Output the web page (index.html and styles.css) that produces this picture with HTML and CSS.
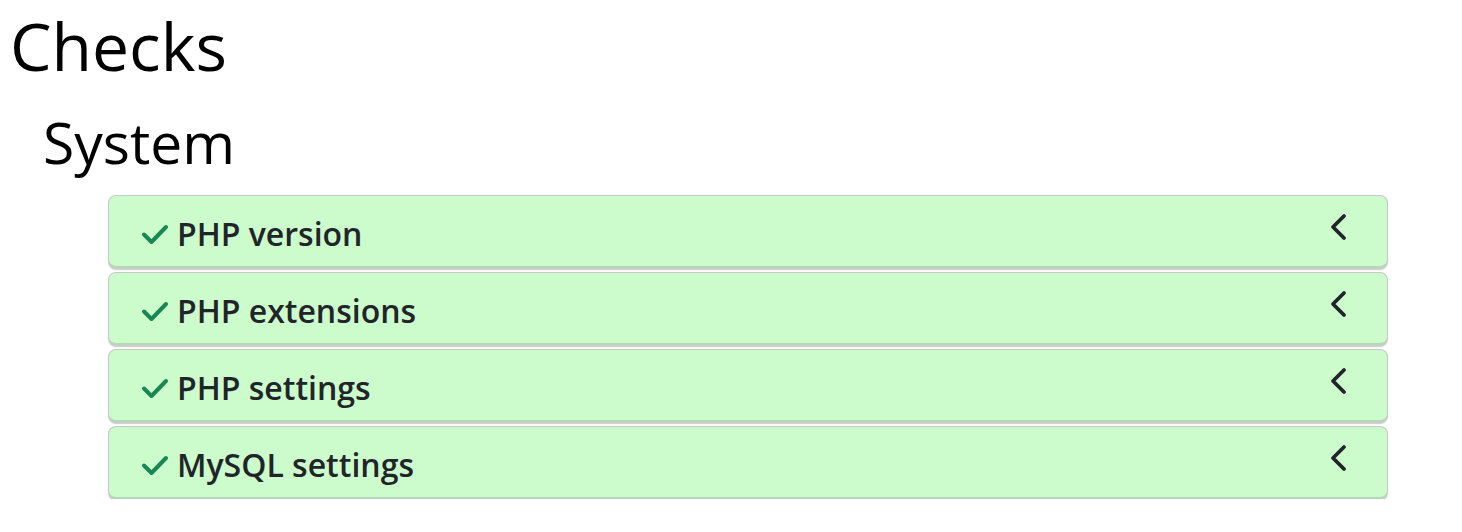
FILE: index.html
```html
<!DOCTYPE html>
<html lang="en">
<head>
    <meta charset="UTF-8">
    <title>Checks</title>
    <link rel="stylesheet" href="styles.css">
</head>
<body>

<h1>Checks</h1>

<section class="section">
    <h2>System</h2>

    <div class="check-list">
        <div class="check">
            <span class="check-mark"><svg viewBox="0 0 28 22" width="28" height="22"><path d="M3 11.5l7.5 7.5L25 4" fill="none" stroke="currentColor" stroke-width="4" stroke-linecap="round" stroke-linejoin="round"/></svg></span>
            <span class="check-title">PHP version</span>
            <span class="chevron"><svg viewBox="0 0 18 28" width="18" height="28"><path d="M15 3L4 14l11 11" fill="none" stroke="currentColor" stroke-width="3.8" stroke-linecap="round" stroke-linejoin="round"/></svg></span>
        </div>
        <div class="check">
            <span class="check-mark"><svg viewBox="0 0 28 22" width="28" height="22"><path d="M3 11.5l7.5 7.5L25 4" fill="none" stroke="currentColor" stroke-width="4" stroke-linecap="round" stroke-linejoin="round"/></svg></span>
            <span class="check-title">PHP extensions</span>
            <span class="chevron"><svg viewBox="0 0 18 28" width="18" height="28"><path d="M15 3L4 14l11 11" fill="none" stroke="currentColor" stroke-width="3.8" stroke-linecap="round" stroke-linejoin="round"/></svg></span>
        </div>
        <div class="check">
            <span class="check-mark"><svg viewBox="0 0 28 22" width="28" height="22"><path d="M3 11.5l7.5 7.5L25 4" fill="none" stroke="currentColor" stroke-width="4" stroke-linecap="round" stroke-linejoin="round"/></svg></span>
            <span class="check-title">PHP settings</span>
            <span class="chevron"><svg viewBox="0 0 18 28" width="18" height="28"><path d="M15 3L4 14l11 11" fill="none" stroke="currentColor" stroke-width="3.8" stroke-linecap="round" stroke-linejoin="round"/></svg></span>
        </div>
        <div class="check">
            <span class="check-mark"><svg viewBox="0 0 28 22" width="28" height="22"><path d="M3 11.5l7.5 7.5L25 4" fill="none" stroke="currentColor" stroke-width="4" stroke-linecap="round" stroke-linejoin="round"/></svg></span>
            <span class="check-title">MySQL settings</span>
            <span class="chevron"><svg viewBox="0 0 18 28" width="18" height="28"><path d="M15 3L4 14l11 11" fill="none" stroke="currentColor" stroke-width="3.8" stroke-linecap="round" stroke-linejoin="round"/></svg></span>
        </div>
    </div>
</section>

</body>
</html>
```

FILE: styles.css
```css
body {
    margin: 0;
    padding: 0 10px;
    font-family: "Open Sans", Arial, sans-serif;
    color: #000;
    background: #fff;
}
h1 {
    font-size: 66px;
    font-weight: 500;
    line-height: 90px;
    margin: 0;
}
.section {
    padding-left: 33px;
}
h2 {
    font-size: 57px;
    font-weight: 500;
    line-height: 104px;
    margin: 0 0 1px;
}
.check-list {
    margin-left: 65px;
    margin-right: 64px;
    display: flex;
    flex-direction: column;
    gap: 4px;
}
.check {
    display: flex;
    align-items: center;
    height: 70px;
    padding: 0 40px 0 32px;
    background: #ccfbcc;
    border: 1px solid #c8c8c8;
    border-bottom: 2px solid #b4d8b4;
    border-radius: 8px;
    box-shadow: 0 2px 1px #cccccc;
    color: #212529;
}
.check-mark {
    display: flex;
    color: #198754;
    margin-right: 8px;
    margin-top: 6px;
}
.check-title {
    flex: 1;
    font-size: 32px;
    font-weight: 600;
    margin-top: 4px;
}
.chevron {
    display: flex;
    margin-top: -8px;
}
```
